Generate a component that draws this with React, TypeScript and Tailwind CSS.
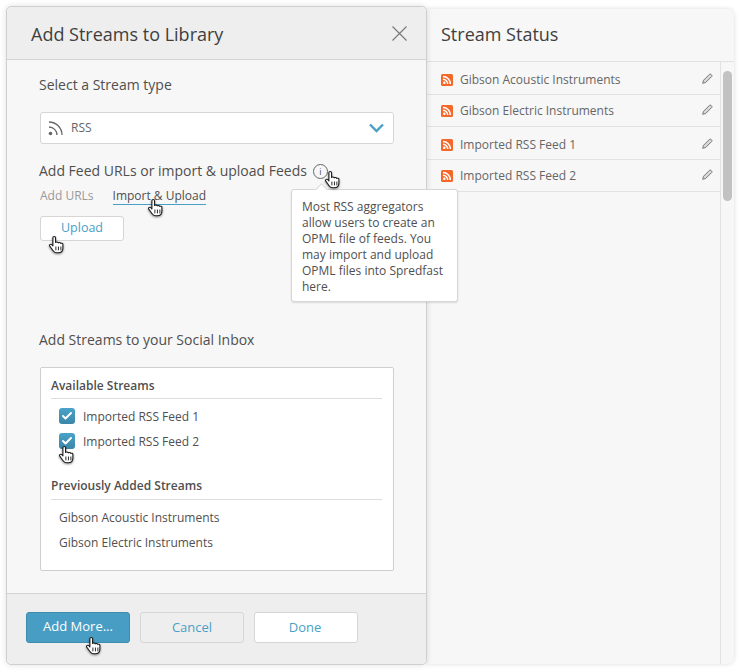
import { Check } from "lucide-react";

const statusRows = [
  { label: "Gibson Acoustic Instruments", row: "h-[33px] pt-[4px]" },
  { label: "Gibson Electric Instruments", row: "h-[32px] pt-px" },
  { label: "Imported RSS Feed 1", row: "h-[33px] pt-[3px]" },
  { label: "Imported RSS Feed 2", row: "h-[32px] pt-px" },
];

function HandCursor({ className }: { className: string }) {
  return (
    <svg
      viewBox="1 0.5 14.4 18.8"
      width="16"
      height="18"
      preserveAspectRatio="none"
      className={"absolute z-20 drop-shadow-[0_1px_1px_rgba(0,0,0,0.45)] " + className}
    >
      <path
        d="M4.5 2.2c0-1.5 2.4-1.5 2.4 0v5.2c.5-1 2.2-.8 2.4.3.6-.8 2.1-.5 2.2.6.7-.6 2-.2 2 1v4c0 2.600-1.400 4.700-4.200 4.700H8.200c-1.700 0-2.700-.9-3.500-2.200L1.600 11c-.8-1.300 1-2.500 2-1.300l.9 1.200z"
        fill="#fff"
        stroke="#1d1d1d"
        strokeWidth="1"
        strokeLinejoin="round"
      />
      <path d="M7.200 11.500v4M9.500 11.500v4M11.700 11.500v4" stroke="#1d1d1d" strokeWidth="0.9" />
    </svg>
  );
}

function RssBadge() {
  return (
    <svg viewBox="0 0 12 12" width="12" height="12" className="shrink-0">
      <rect width="12" height="12" rx="1.5" fill="#f4692a" />
      <circle cx="3.300" cy="8.700" r="1.300" fill="#fff" />
      <path d="M2 5.300a4.700 4.700 0 0 1 4.700 4.700M2 2.600A7.400 7.400 0 0 1 9.400 10" fill="none" stroke="#fff" strokeWidth="1.500" />
    </svg>
  );
}

function RssOutline() {
  return (
    <svg viewBox="0 0 15 15" width="15" height="15" className="shrink-0 text-[#666666]">
      <circle cx="2.500" cy="12.500" r="1.800" fill="currentColor" />
      <path d="M1 6a8 8 0 0 1 8 8M1 1a13 13 0 0 1 13 13" fill="none" stroke="currentColor" strokeWidth="1.300" />
    </svg>
  );
}

function PencilIcon() {
  return (
    <svg viewBox="0 0 11 11" width="11" height="11" className="mb-[3px] ml-auto shrink-0">
      <path d="M.7 10.300l.8-3 6-6c.4-.4 1-.4 1.400 0l.8.8c.4.4.4 1 0 1.400l-6 6z" fill="#d8d8d8" stroke="#777777" strokeWidth="1" strokeLinejoin="round" />
    </svg>
  );
}

function Tick({ className }: { className?: string }) {
  return (
    <span className={"flex h-4 w-4 shrink-0 items-center justify-center rounded-[3px] bg-gradient-to-b from-[#4aa3c9] to-[#3a86a8] " + (className ?? "")}>
      <Check size={12} strokeWidth={4} className="text-white" />
    </span>
  );
}

export default function App() {
  return (
    <div className="relative flex h-[671px] w-[740px] overflow-hidden bg-white pl-[6px] pt-[6px] font-['Open_Sans',sans-serif] text-[#4f4f4f]">
      {/* Dialog */}
      <div className="relative z-10 flex h-[659px] w-[421px] shrink-0 flex-col rounded-[5px] border border-[#cfcfcf] bg-[#f7f7f7] shadow-[0_0_6px_rgba(0,0,0,0.12)]">
        <div className="flex h-[53px] shrink-0 items-center justify-between rounded-t-[5px] border-b border-[#d4d4d4] bg-[#eeeeee] pl-[24px] pr-[19px] pt-[2px]">
          <h1 className="text-[18px] text-[#3f3f3f]">Add Streams to Library</h1>
          <svg viewBox="0 0 15 15" width="15" height="15" className="mb-[2px] text-[#7a7a7a]">
            <path d="M.5.5l14 14M14.500.5l-14 14" stroke="currentColor" strokeWidth="1.200" fill="none" />
          </svg>
        </div>

        <div className="relative flex-1 px-[33px]">
          <p className="-ml-px mt-[15px] text-[14px] leading-[20px]">Select a Stream type</p>

          <div className="mt-[17px] flex h-[32px] w-[354px] items-center rounded-[3px] border border-[#d6d6d6] bg-white pl-[7px] pr-[9px]">
            <RssOutline />
            <span className="ml-[8px] text-[12px] font-medium text-[#666666]">RSS</span>
            <svg viewBox="0 0 15 10" width="15" height="10" className="ml-auto text-[#4a9fc6]">
              <path d="M1 1.500l6.500 6.500L14 1.500" fill="none" stroke="currentColor" strokeWidth="2.400" />
            </svg>
          </div>

          <div className="-ml-px mt-[17px] flex items-center gap-[6px]">
            <p className="text-[14px] leading-[20px]">Add Feed URLs or import &amp; upload Feeds</p>
            <span className="flex h-[15px] w-[15px] items-center justify-center rounded-full border border-[#666666] text-[9px] leading-none">i</span>
          </div>

          <div className="mt-[6px] flex gap-[19px] text-[12px] leading-[17px]">
            <span className="text-[#999999]">Add URLs</span>
            <span className="border-b border-[#4a9fc6] text-[#4f4f4f]">Import &amp; Upload</span>
          </div>

          <div className="mt-[11px] flex h-[25px] w-[84px] items-center justify-center rounded-[3px] border border-[#d6d6d6] bg-white text-[12.5px] text-[#4a9fc6]">
            Upload
          </div>

          <p className="-ml-px mt-[89px] text-[14px] leading-[20px]">Add Streams to your Social Inbox</p>

          <div className="mt-[17px] h-[204px] w-[354px] rounded-[2px] border border-[#cfcfcf] bg-white pl-[10px] pr-[11px] pt-[9px]">
            <p className="border-b border-[#dddddd] pb-[4px] text-[12px] font-semibold leading-[17px]">Available Streams</p>
            <div className="mt-[9px] flex h-4 items-center gap-2 pl-[8px] text-[12px] leading-[16px]">
              <Tick />
              <span className="mt-[2px]">Imported RSS Feed 1</span>
            </div>
            <div className="mt-[9px] flex h-4 items-center gap-2 pl-[8px] text-[12px] leading-[16px]">
              <Tick />
              <span className="mt-[2px]">Imported RSS Feed 2</span>
            </div>
            <p className="mt-[28px] border-b border-[#dddddd] pb-[5px] text-[12px] font-semibold leading-[17px]">Previously Added Streams</p>
            <p className="mt-[9px] pl-[8px] text-[12px] leading-[17px]">Gibson Acoustic Instruments</p>
            <p className="mt-[8px] pl-[8px] text-[12px] leading-[17px]">Gibson Electric Instruments</p>
          </div>
        </div>

        <div className="flex h-[71px] shrink-0 gap-[10px] rounded-b-[5px] border-t border-[#d4d4d4] bg-[#eeeeee] pl-[19px] pt-[18px]">
          <div className="flex h-[31px] w-[104px] items-center justify-center rounded-[3px] border border-[#3f8cae] bg-[#489dc4] pb-[2px] text-[13px] text-white">Add More...</div>
          <div className="flex h-[31px] w-[104px] items-center justify-center rounded-[3px] border border-[#d6d6d6] bg-[#eeeeee] text-[13px] text-[#4a9fc6]">Cancel</div>
          <div className="flex h-[31px] w-[104px] items-center justify-center rounded-[3px] border border-[#d6d6d6] bg-white pr-[2px] text-[13px] text-[#4a9fc6]">Done</div>
        </div>

        <HandCursor className="left-[318px] top-[164px]" />
        <HandCursor className="left-[141px] top-[192px]" />
        <HandCursor className="left-[42px] top-[229px]" />
        <HandCursor className="left-[52px] top-[439px]" />
        <HandCursor className="left-[79px] top-[630px]" />

        {/* Tooltip */}
        <div className="absolute left-[284px] top-[182px] z-10 h-[113px] w-[167px] rounded-[3px] border border-[#d6d6d6] bg-white pl-[10px] pr-[8px] pt-[9px] text-[12px] leading-[16px] text-[#4f4f4f] shadow-[0_1px_2px_rgba(0,0,0,0.12)]">
          <span className="absolute -top-[5px] left-[25px] h-[9px] w-[9px] rotate-45 border-l border-t border-[#d6d6d6] bg-white" />
          Most RSS aggregators allow users to create an OPML file of feeds. You may import and upload OPML files into Spredfast here.
        </div>
      </div>

      {/* Stream Status panel */}
      <div className="mt-[3px] flex h-[655px] w-[307px] shrink-0 flex-col rounded-r-[7px] bg-[#f7f7f7] shadow-[0_0_5px_rgba(0,0,0,0.14)]">
        <h2 className="flex h-[53px] shrink-0 items-center border-b border-[#e2e2e2] pb-px pl-[14px] text-[18px] text-[#3f3f3f]">Stream Status</h2>
        <div className="flex flex-1">
          <div className="w-[294px] border-r border-[#e2e2e2]">
            {statusRows.map((item) => (
              <div key={item.label} className={"flex items-center border-b border-[#e2e2e2] pl-[14px] pr-[7px] text-[12px] text-[#666666] " + item.row}>
                <RssBadge />
                <span className="ml-[7px]">{item.label}</span>
                <PencilIcon />
              </div>
            ))}
          </div>
          <div className="ml-[2px] mt-[9px] h-[130px] w-[9px] rounded-full bg-[#c2c2c2]" />
        </div>
      </div>
    </div>
  );
}
